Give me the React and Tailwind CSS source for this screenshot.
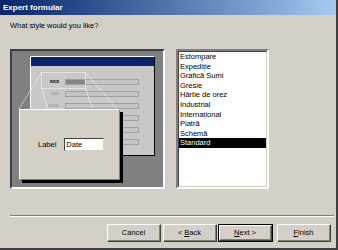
const items = ['Estompare', 'Expediție', 'Grafică Sumi', 'Gresie', 'Hârtie de orez', 'Industrial', 'Internațional', 'Piatră', 'Schemă', 'Standard'];

const Btn = ({ children, def, className = '' }) => (
    <div className={`${def ? 'border border-black' : ''} ${className}`}>
        <div className="h-full border-t border-l border-white border-r border-b border-r-[#404040] border-b-[#404040]">
            <div className="h-full flex items-center justify-center border-r border-b border-[#808080] text-[7.5px] text-black">
                {children}
            </div>
        </div>
    </div>
);

const Row = ({ label, bold, first }) => (
    <div className="flex items-center h-[6px] gap-[6px]">
        <div className={`w-[28px] text-right text-[5.5px] leading-none ${bold ? 'font-bold text-black' : 'text-[#909090]'}`}>{label}</div>
        <div className="w-[74px] h-[6px] border border-[#a0a0a0] bg-[#c4c4c4] flex">
            {first && <div className="w-[19px] h-full bg-[#858585]"></div>}
        </div>
    </div>
);

export default function App() {
    return (
        <div className="w-[338px] h-[250px] bg-[#d4d0c8] flex flex-col border-r-2 border-b-2 border-r-[#404040] border-b-[#404040]" style={{ fontFamily: '"Liberation Sans", Arial, sans-serif' }}>
            <div className="h-[15px] shrink-0 bg-gradient-to-r from-[#0a246a] to-[#a6caf0] flex items-center pl-[3px] text-white font-bold text-[8px]">
                Expert formular
            </div>
            <div className="pl-[10px] pt-[6px] text-[7.5px] text-black leading-[9px]">What style would you like?</div>

            <div className="flex pl-[10px] mt-[19px] gap-[11px]">
                {/* preview */}
                <div className="relative w-[155px] h-[140px] bg-[#808080] border-2 border-t-[#404040] border-l-[#404040] border-r-white border-b-white pl-[18px] pt-[5px]">
                    <div className="w-[125px] h-[100px] bg-[#c8c8c8] border border-t-white border-l-white border-r-black border-b-black">
                        <div className="h-[9px] bg-[#0a246a]"></div>
                        <div className="flex flex-col gap-[6px] mt-[13px]">
                            <Row label="xxx" bold first />
                            <Row label="xxx" />
                            <Row label="xxxx" />
                            <Row label="" />
                            <Row label="" />
                            <Row label="" />
                        </div>
                    </div>
                    <svg className="absolute left-0 top-0" width="151" height="136">
                        <g stroke="#ffffff" strokeWidth="1" strokeDasharray="1 1" fill="none">
                            <rect x="29.5" y="21.5" width="44" height="16" />
                            <line x1="29.5" y1="21.5" x2="7" y2="58" />
                            <line x1="73.5" y1="21.5" x2="105" y2="58" />
                            <line x1="29.5" y1="37.5" x2="36" y2="58" />
                            <line x1="73.5" y1="37.5" x2="81" y2="58" />
                        </g>
                    </svg>
                    <div className="absolute left-[7px] top-[58px] w-[101px] h-[71px] bg-[#d4d0c8] border border-t-white border-l-white border-r-[#808080] border-b-[#808080] shadow-[3px_3px_0_#000] flex items-center pl-[18px] gap-[8px]">
                        <span className="text-[7.5px] text-black">Label</span>
                        <div className="w-[40px] h-[13px] bg-white border border-t-[#404040] border-l-[#404040] border-r-[#d4d0c8] border-b-[#d4d0c8] text-[7.5px] leading-[11px] pl-[1px] text-black">Date</div>
                    </div>
                </div>

                {/* list */}
                <div className="w-[93px] h-[140px] bg-white border-2 border-t-[#808080] border-l-[#808080] border-r-white border-b-white">
                    <div className="border border-t-[#404040] border-l-[#404040] border-r-[#d4d0c8] border-b-[#d4d0c8] h-full">
                        {items.map((it) => (
                            <div key={it} className={`h-[9.6px] leading-[9.6px] text-[7.5px] pl-[1px] ${it === 'Standard' ? 'bg-black text-white' : 'text-black'}`}>
                                {it}
                            </div>
                        ))}
                    </div>
                </div>
            </div>

            <div className="mx-[10px] mr-[2px] mt-[26px] border-t border-t-[#808080] border-b border-b-white"></div>

            <div className="flex mt-[7px] pl-[107px] h-[18px]">
                <Btn className="w-[54px]">Cancel</Btn>
                <Btn className="w-[54px] ml-[2px]">&lt; <span className="underline ml-[2px]">B</span>ack</Btn>
                <Btn def className="w-[55px] ml-[1px]"><span className="underline">N</span>ext &gt;</Btn>
                <Btn className="w-[54px] ml-[4px]"><span className="underline">F</span>inish</Btn>
            </div>
        </div>
    );
}
